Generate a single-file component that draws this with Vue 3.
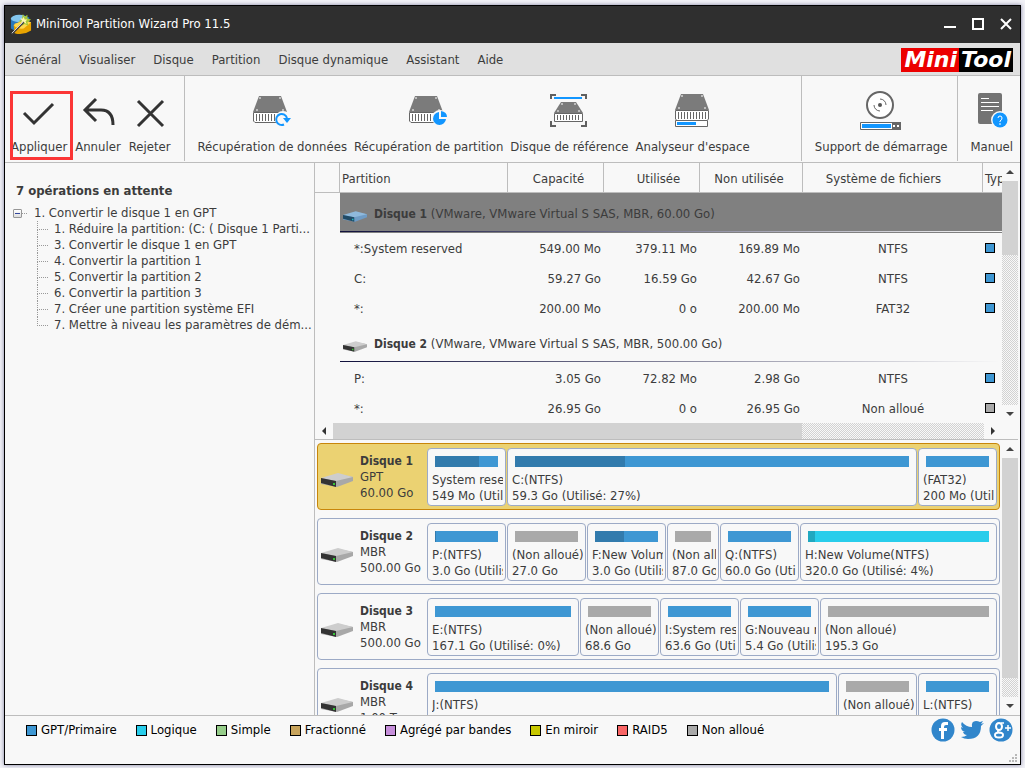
<script setup>
const menu = ['Général', 'Visualiser', 'Disque', 'Partition', 'Disque dynamique', 'Assistant', 'Aide']

const operations = [
  '1. Réduire la partition: (C: ( Disque 1 Parti...',
  '3. Convertir le disque 1 en GPT',
  '4. Convertir la partition 1',
  '5. Convertir la partition 2',
  '6. Convertir la partition 3',
  '7. Créer une partition système EFI',
  '7. Mettre à niveau les paramètres de dém...',
]

const groups = [
  {
    name: 'Disque 1',
    info: '(VMware, VMware Virtual S SAS, MBR, 60.00 Go)',
    selected: true,
    rows: [
      ['*:System reserved', '549.00 Mo', '379.11 Mo', '169.89 Mo', 'NTFS', 'primary'],
      ['C:', '59.27 Go', '16.59 Go', '42.67 Go', 'NTFS', 'primary'],
      ['*:', '200.00 Mo', '0 o', '200.00 Mo', 'FAT32', 'primary'],
    ],
  },
  {
    name: 'Disque 2',
    info: '(VMware, VMware Virtual S SAS, MBR, 500.00 Go)',
    selected: false,
    rows: [
      ['P:', '3.05 Go', '72.82 Mo', '2.98 Go', 'NTFS', 'primary'],
      ['*:', '26.95 Go', '0 o', '26.95 Go', 'Non alloué', 'free'],
    ],
  },
]

const disks = [
  {
    name: 'Disque 1', scheme: 'GPT', size: '60.00 Go', selected: true,
    parts: [
      { label: 'System reserved', size: '549 Mo (Utilisé', used: 70, kind: 'primary', span: 'normal' },
      { label: 'C:(NTFS)', size: '59.3 Go (Utilisé: 27%)', used: 28, kind: 'primary', span: 'grow' },
      { label: '(FAT32)', size: '200 Mo (Utilisé', used: 0, kind: 'primary', span: 'normal' },
    ],
  },
  {
    name: 'Disque 2', scheme: 'MBR', size: '500.00 Go',
    parts: [
      { label: 'P:(NTFS)', size: '3.0 Go (Utilisé', used: 2, kind: 'primary', span: 'normal' },
      { label: '(Non alloué)', size: '27.0 Go', used: 0, kind: 'free', span: 'normal' },
      { label: 'F:New Volume', size: '3.0 Go (Utilisé', used: 46, kind: 'primary', span: 'normal' },
      { label: '(Non alloué)', size: '87.0 Go', used: 0, kind: 'free', span: 'small' },
      { label: 'Q:(NTFS)', size: '60.0 Go (Utilisé', used: 0, kind: 'primary', span: 'normal' },
      { label: 'H:New Volume(NTFS)', size: '320.0 Go (Utilisé: 4%)', used: 4, kind: 'logical', span: 'grow' },
    ],
  },
  {
    name: 'Disque 3', scheme: 'MBR', size: '500.00 Go',
    parts: [
      { label: 'E:(NTFS)', size: '167.1 Go (Utilisé: 0%)', used: 0, kind: 'primary', span: 'large' },
      { label: '(Non alloué)', size: '68.6 Go', used: 0, kind: 'free', span: 'normal' },
      { label: 'I:System reserved', size: '63.6 Go (Utilisé', used: 0, kind: 'primary', span: 'normal' },
      { label: 'G:Nouveau nom', size: '5.4 Go (Utilisé', used: 0, kind: 'primary', span: 'normal' },
      { label: '(Non alloué)', size: '195.3 Go', used: 0, kind: 'free', span: 'grow' },
    ],
  },
  {
    name: 'Disque 4', scheme: 'MBR', size: '1.00 To',
    parts: [
      { label: 'J:(NTFS)', size: '', used: 0, kind: 'primary', span: 'grow' },
      { label: '(Non alloué)', size: '', used: 0, kind: 'free', span: 'normal' },
      { label: 'L:(NTFS)', size: '', used: 0, kind: 'primary', span: 'normal' },
    ],
  },
]

const legend = [
  ['GPT/Primaire', 'primary'],
  ['Logique', 'logical'],
  ['Simple', 'simple'],
  ['Fractionné', 'spanned'],
  ['Agrégé par bandes', 'striped'],
  ['En miroir', 'mirror'],
  ['RAID5', 'raid'],
  ['Non alloué', 'free'],
]
</script>

<template>
  <div class="desktop">
    <svg class="defs" aria-hidden="true">
      <symbol id="drive" viewBox="0 0 32 14">
        <path d="M0 6 17 1 32 4 32 8 16 14 0 11Z" fill="#a8a8a8" />
        <path d="M0 5 17 0 32 4 15 8Z" fill="#cdcdcd" />
        <path d="M0 5 15 8 15 14 0 10Z" fill="#333" />
        <path d="M12 10h2v2h-2z" fill="#35c435" />
      </symbol>
      <symbol id="drive-blue" viewBox="0 0 32 14">
        <path d="M0 6 17 1 32 4 32 8 16 14 0 11Z" fill="#6f9cc6" />
        <path d="M0 5 17 0 32 4 15 8Z" fill="#8fb9dc" />
        <path d="M0 5 15 8 15 14 0 10Z" fill="#204a66" />
        <path d="M12 10h2v2h-2z" fill="#20b8c0" />
      </symbol>
      <symbol id="hdd" viewBox="0 0 36 30">
        <path d="M7 1h22l6 16H1Z" fill="#7b7b7b" />
        <path d="M1.500 17.500h33v8.500l-1.500 1.500h-30l-1.500-1.500z" fill="#fff" stroke="#666" />
        <path d="M4.500 19v7M7.500 19v7M10.500 19v7M13.500 19v7M16.500 19v7M19.500 19v7M22.500 19v7M25.500 19v7M28.500 19v7M31.500 19v7" stroke="#666" />
        <path d="M8 2v2M28 2v2M4 15h2M30 15h2" stroke="#fff" />
      </symbol>
    </svg>

    <div class="window">
      <header class="titlebar">
        <svg class="app-icon" viewBox="0 0 24 24" aria-hidden="true">
          <path d="M1 6Q11-1 21 5v12Q12 25 1 17Z" fill="#2878bd" />
          <ellipse cx="10" cy="6" rx="9" ry="4" fill="#83c6ee" />
          <path d="M4 13Q13 7 23 10v9q-9 6-18 3Z" fill="#e9a400" />
          <path d="M4 13Q13 7 23 10l-8 7q-7 1-11-4Z" fill="#ffd84e" />
          <path d="m14 1 2 3 3-2 0 4 4 1-4 3 1 4-4-2-3 2 0-4-4-1 4-2z" fill="#a6c636" />
          <path d="m15 4 1 3 3 0-2 2 1 3-3-2-3 1 1-3-2-2h3z" fill="#fff8b0" />
          <path d="M2 23 15 10" stroke="#444" stroke-width="2" />
          <path d="M2 22 14 10" stroke="#ddd" />
        </svg>
        <h1>MiniTool Partition Wizard Pro 11.5</h1>
        <div class="controls">
          <button type="button" aria-label="Réduire"><svg viewBox="0 0 12 12"><path d="M0 9h12" stroke="#fff" stroke-width="2" /></svg></button>
          <button type="button" aria-label="Agrandir"><svg viewBox="0 0 12 12"><path d="M1 1h10v10H1z" fill="none" stroke="#fff" stroke-width="2" /></svg></button>
          <button type="button" aria-label="Fermer"><svg viewBox="0 0 12 12"><path d="m1 1 10 10M11 1 1 11" stroke="#fff" stroke-width="2" /></svg></button>
        </div>
      </header>

      <nav class="menubar">
        <button v-for="m in menu" :key="m" type="button">{{ m }}</button>
        <div class="brand"><span class="mini">Mini</span><span class="tool">Tool</span></div>
      </nav>

      <div class="toolbar">
        <div class="group edit">
          <button type="button" class="apply">
            <svg viewBox="0 0 40 40"><path d="m5 21 10 10 19-19" fill="none" stroke="#333" stroke-width="3" /></svg>
            <span>Appliquer</span>
          </button>
          <button type="button">
            <svg viewBox="0 0 40 40"><path d="M18 7 7 18l11 11M7 18h16q12 0 12 15" fill="none" stroke="#333" stroke-width="3" /></svg>
            <span>Annuler</span>
          </button>
          <button type="button">
            <svg viewBox="0 0 40 40"><path d="m8 9 25 25M33 9 8 34" stroke="#333" stroke-width="3" /></svg>
            <span>Rejeter</span>
          </button>
        </div>
        <div class="group tools">
          <button type="button">
            <svg viewBox="0 0 40 40">
              <use href="#hdd" x="0" y="3" width="36" height="30" />
              <circle cx="31" cy="27" r="8" fill="#f8f8f8" />
              <path d="M32 32.500A5.500 5.500 0 1 1 35 26" fill="none" stroke="#1296ff" stroke-width="2" />
              <path d="M31 26h8l-4 5z" fill="#1296ff" />
            </svg>
            <span>Récupération de données</span>
          </button>
          <button type="button">
            <svg viewBox="0 0 40 40">
              <use href="#hdd" x="-1" y="3" width="36" height="30" />
              <circle cx="31" cy="26" r="8" fill="#f8f8f8" />
              <path d="M30 20a6.500 6.500 0 1 0 7 7h-7z" fill="#1296ff" />
              <path d="M32 19q6 1 6 6h-6z" fill="#1296ff" />
            </svg>
            <span>Récupération de partition</span>
          </button>
          <button type="button">
            <svg viewBox="0 0 40 40">
              <path d="M2 7V3h5M32 3h5v4M2 29v5h5M32 34h5v-5" fill="none" stroke="#606060" stroke-width="2" />
              <path d="M5 6h28" stroke="#1296ff" stroke-width="2" />
              <path d="M12 10h15l7 11H5Z" fill="#7b7b7b" />
              <path d="M5.500 21.500h28v8h-28z" fill="#fff" stroke="#666" />
              <path d="M8.500 23v5M11.500 23v5M14.500 23v5M17.500 23v5M20.500 23v5M23.500 23v5M26.500 23v5M29.500 23v5" stroke="#666" />
              <path d="M13 11v2M26 11v2M8 19h2M29 19h2" stroke="#fff" />
            </svg>
            <span>Disque de référence</span>
          </button>
          <button type="button">
            <svg viewBox="0 0 40 40">
              <use href="#hdd" x="1" y="1" width="36" height="30" />
              <path d="M2.500 28.500h32v6h-32z" fill="#fff" stroke="#666" />
              <path d="M4 31.500h19" stroke="#1296ff" stroke-width="3" />
            </svg>
            <span>Analyseur d'espace</span>
          </button>
        </div>
        <div class="group boot">
          <button type="button">
            <svg viewBox="0 0 40 40" class="overflow">
              <circle cx="19" cy="13" r="13" fill="#fff" stroke="#666" stroke-width="2" />
              <circle cx="19" cy="13" r="2" fill="#555" />
              <path d="M19 7a6 6 0 0 1 6 6M19 19a6 6 0 0 1-6-6" fill="none" stroke="#666" />
              <path d="M-.5 30.500h40v7h-40z" fill="#fff" stroke="#666" />
              <path d="M1 34h29" stroke="#1296ff" stroke-width="4" />
              <path d="M31 30h9v8h-9z" fill="#666" />
              <path d="M32 34h2M36 34h2" stroke="#fff" stroke-width="2" />
            </svg>
            <span>Support de démarrage</span>
          </button>
        </div>
        <div class="group last">
          <button type="button">
            <svg viewBox="0 0 40 40">
              <path d="M6 3q0-2 2-2h20q2 0 2 2v29H8q-2 0-2-2Z" fill="#737373" />
              <path d="M9 6.500h8M9 10.500h18M9 14.500h18M9 18.500h12" stroke="#fff" />
              <circle cx="28" cy="28" r="9" fill="#f8f8f8" />
              <circle cx="28" cy="28" r="7.500" fill="#1296ff" />
              <path d="M26 26q0-2 2-2t2 2-2 3v1M28 31v2" fill="none" stroke="#fff" />
            </svg>
            <span>Manuel</span>
          </button>
        </div>
      </div>

      <main class="main">
        <aside class="pending">
          <h2>7 opérations en attente</h2>
          <div class="root">
            <button type="button" class="toggle" aria-label="Replier"></button>
            <span class="stub"></span>
            <span>1. Convertir le disque 1 en GPT</span>
          </div>
          <ul class="tree">
            <li v-for="o in operations" :key="o">{{ o }}</li>
          </ul>
        </aside>

        <section class="content">
          <div class="table-pane">
            <div class="table-view">
              <table>
                <colgroup>
                  <col class="c-gutter" /><col class="c-name" /><col class="c-size" /><col class="c-size" />
                  <col class="c-free" /><col class="c-fs" /><col class="c-type" />
                </colgroup>
                <thead>
                  <tr>
                    <th></th>
                    <th class="left">Partition</th>
                    <th class="nudged">Capacité</th>
                    <th class="shifted">Utilisée</th>
                    <th class="before">Non utilisée</th>
                    <th class="wide-before">Système de fichiers</th>
                    <th class="left">Type</th>
                  </tr>
                </thead>
                <tbody v-for="g in groups" :key="g.name">
                  <tr class="disk-row" :class="{ selected: g.selected }">
                    <td></td>
                    <td colspan="6" class="disk-cell">
                      <div class="disk-title">
                        <svg class="row-drive" aria-hidden="true"><use :href="g.selected ? '#drive-blue' : '#drive'" /></svg>
                        <span><b>{{ g.name }}</b> {{ g.info }}</span>
                      </div>
                    </td>
                  </tr>
                  <tr v-for="r in g.rows" :key="r[0]">
                    <td></td>
                    <td class="name">{{ r[0] }}</td>
                    <td class="num">{{ r[1] }}</td>
                    <td class="num">{{ r[2] }}</td>
                    <td class="num">{{ r[3] }}</td>
                    <td class="fs">{{ r[4] }}</td>
                    <td class="type"><i class="swatch small" :class="r[5]"></i></td>
                  </tr>
                </tbody>
              </table>
            </div>
            <div class="vbar">
              <button type="button" aria-label="Défiler vers le haut"><i class="up"></i></button>
              <div class="track"><div class="thumb third"></div></div>
              <button type="button" aria-label="Défiler vers le bas"><i class="down"></i></button>
            </div>
            <div class="hbar">
              <button type="button" aria-label="Défiler vers la gauche"><i class="prev"></i></button>
              <div class="track"><div class="thumb wide"></div></div>
              <button type="button" aria-label="Défiler vers la droite"><i class="next"></i></button>
            </div>
          </div>

          <div class="map-pane">
            <div class="map">
              <article v-for="d in disks" :key="d.name" class="card" :class="{ selected: d.selected }">
                <svg class="card-drive" aria-hidden="true"><use href="#drive" /></svg>
                <div class="disk-info">
                  <b>{{ d.name }}</b>
                  <span>{{ d.scheme }}</span>
                  <span>{{ d.size }}</span>
                </div>
                <div class="parts">
                  <div v-for="(p, i) in d.parts" :key="i" class="part" :class="p.span">
                    <div class="bar" :class="p.kind"><div class="used" :style="{ width: p.used + '%' }"></div></div>
                    <div class="line">{{ p.label }}</div>
                    <div class="line">{{ p.size }}</div>
                  </div>
                </div>
              </article>
            </div>
            <div class="vbar">
              <button type="button" aria-label="Défiler vers le haut"><i class="up"></i></button>
              <div class="track"><div class="thumb most"></div></div>
              <button type="button" aria-label="Défiler vers le bas"><i class="down"></i></button>
            </div>
          </div>
        </section>
      </main>

      <footer class="footer">
        <ul class="legend">
          <li v-for="l in legend" :key="l[0]"><i class="swatch" :class="l[1]"></i>{{ l[0] }}</li>
        </ul>
        <div class="social">
          <a href="#" aria-label="Facebook">
            <svg viewBox="0 0 24 24"><circle cx="12" cy="12" r="11.500" fill="#3186cb" /><path d="M10 21v-8H8v-3h2V8q0-4 4-4h3v3h-2q-2 0-2 2v1h3v3h-3v8z" fill="#fff" /></svg>
          </a>
          <a href="#" aria-label="Twitter">
            <svg viewBox="0 0 24 24"><path d="M1 19q4 0 6-2-3 0-4-3h2q-4-1-4-5l2 1Q0 7 2 4q4 5 10 5-1-6 4-6 2 0 4 1l3-1-2 3 3-1-3 3q0 13-13 13-4 0-7-2z" fill="#3186cb" /></svg>
          </a>
          <a href="#" aria-label="Google+">
            <svg viewBox="0 0 24 24">
              <circle cx="12" cy="12" r="11.500" fill="#3186cb" />
              <ellipse cx="10" cy="8.500" rx="3" ry="3.500" fill="none" stroke="#fff" stroke-width="2" />
              <ellipse cx="10" cy="17" rx="4" ry="2.500" fill="none" stroke="#fff" stroke-width="2" />
              <path d="M12 5h3M10 12q-3 1 1 3" fill="none" stroke="#fff" stroke-width="1.500" />
              <path d="M16 10h6M19 7v6" stroke="#fff" stroke-width="1.500" />
            </svg>
          </a>
        </div>
        <svg class="grip" viewBox="0 0 8 8" aria-hidden="true">
          <path d="M6 0h2v2H6zM3 3h2v2H3zM6 3h2v2H6zM0 6h2v2H0zM3 6h2v2H3zM6 6h2v2H6z" fill="#b8b8b8" />
        </svg>
      </footer>
    </div>
  </div>
</template>

<style>
body {
  background: #f1f1f6;
}
</style>

<style scoped>
* {
  box-sizing: border-box;
}
button {
  appearance: none;
  border: 0;
  margin: 0;
  padding: 0;
  background: none;
  font: inherit;
  color: inherit;
}
ul {
  list-style: none;
  margin: 0;
  padding: 0;
}
.defs {
  position: absolute;
  width: 0;
  height: 0;
}
.desktop {
  height: 100vh;
  padding: 5px 4px 3px;
  font: 13px/16px "DejaVu Sans Condensed", "DejaVu Sans", sans-serif;
  color: #3c3c3c;
}
.window {
  display: flex;
  flex-direction: column;
  height: 100%;
  border: 1px solid #000;
  background: #f8f8f8;
  box-shadow: 0 0 4px #7c7c9c;
}

/* title bar */
.titlebar {
  display: flex;
  align-items: center;
  flex: none;
  height: 37px;
  padding: 0 8px 2px 5px;
  background: #2f2f2f;
  color: #fff;
}
.app-icon {
  width: 22px;
  height: 22px;
}
h1 {
  margin: 0 auto 0 4px;
  font-size: 13px;
  font-weight: normal;
}
.controls {
  display: flex;
  gap: 16px;
}
.controls svg {
  display: block;
  width: 12px;
  height: 12px;
}

/* menu */
.menubar {
  display: flex;
  align-items: center;
  flex: none;
  gap: 18px;
  height: 33px;
  padding: 1px 7px 0 10px;
  border-bottom: 1px solid #bdbdbd;
  background: #e0e0e0;
}
.brand {
  display: flex;
  margin-left: auto;
  font: italic bold 22px/24px "DejaVu Sans", sans-serif;
  color: #fff;
}
.mini {
  padding: 0 2px 0 3px;
  background: #ec0000;
}
.tool {
  padding: 0 2px;
  background: #000;
}

/* toolbar */
.toolbar {
  display: flex;
  flex: none;
  height: 87px;
  border-bottom: 1px solid #bdbdbd;
}
.group {
  display: flex;
  align-items: flex-start;
  height: 85px;
  padding: 16px 10px 0 13px;
  border-right: 1px solid #bdbdbd;
}
.group.edit {
  gap: 8px;
  padding: 16px 14px 0 6px;
}
.group.tools {
  flex: 1;
  gap: 7px;
  padding-left: 12px;
}
.group.last {
  padding-left: 12px;
  padding-right: 7px;
  border-right: 0;
}
.group button {
  display: flex;
  flex-direction: column;
  align-items: center;
  gap: 7px;
  white-space: nowrap;
}
.group svg {
  display: block;
  width: 40px;
  height: 40px;
  overflow: visible;
}
.apply {
  position: relative;
}
.apply::after {
  content: "";
  position: absolute;
  inset: -1px -6px -5px -1px;
  border: 3px solid #fb3636;
}

/* pending operations */
.main {
  display: flex;
  flex: 1;
  min-height: 0;
}
.pending {
  flex: none;
  width: 310px;
  padding: 20px 0 0 8px;
  border-right: 1px solid #bdbdbd;
  white-space: nowrap;
  overflow: hidden;
}
h2 {
  margin: 0 0 6px 3px;
  font-size: 13px;
  line-height: 16px;
}
.root {
  display: flex;
  align-items: center;
}
.toggle {
  width: 9px;
  height: 9px;
  border: 1px solid #969696;
  border-radius: 1px;
  background: linear-gradient(#33479c, #33479c) center / 5px 1px no-repeat, linear-gradient(#fff, #ddd);
}
.stub {
  width: 5px;
  margin-right: 7px;
  border-top: 1px dotted #999;
}
.tree {
  margin-left: 24px;
}
.tree li {
  position: relative;
  padding-left: 17px;
}
.tree li::before {
  content: "";
  position: absolute;
  left: 0;
  top: 0;
  width: 10px;
  height: 8px;
  border-left: 1px dotted #999;
  border-bottom: 1px dotted #999;
}
.tree li:not(:last-child)::after {
  content: "";
  position: absolute;
  left: 0;
  top: 8px;
  height: 8px;
  border-left: 1px dotted #999;
}

/* partition table */
.content {
  display: flex;
  flex: 1;
  flex-direction: column;
  min-width: 0;
  padding-right: 2px;
}
.table-pane {
  display: grid;
  flex: none;
  grid-template-columns: minmax(0, 1fr) 16px;
  grid-template-rows: 260px 16px;
  border-bottom: 1px solid #bdbdbd;
}
.table-view {
  overflow: hidden;
}
table {
  width: 900px;
  table-layout: fixed;
  border-collapse: separate;
  border-spacing: 0;
}
.c-gutter { width: 25px; }
.c-name { width: 168px; }
.c-size { width: 96px; }
.c-free { width: 103px; }
.c-fs { width: 180px; }
th {
  height: 30px;
  padding: 2px 2px 0;
  border-right: 1px solid #bdbdbd;
  border-bottom: 1px solid #bdbdbd;
  font-weight: normal;
}
th.left {
  text-align: left;
}
th.nudged {
  padding-left: 8px;
}
th.shifted {
  padding-left: 16px;
}
th.before {
  padding-right: 6px;
}
th.wide-before {
  padding-right: 20px;
}
td {
  height: 30px;
  padding: 2px 2px 0;
}
.disk-row td {
  height: 40px;
}
.disk-row .disk-cell {
  background: linear-gradient(90deg, #10103c, #f8f8f8 660px) 0 38px / 100% 1px no-repeat;
}
.disk-row.selected .disk-cell {
  background-color: #808080;
}
.disk-title {
  display: flex;
  align-items: center;
  gap: 7px;
  padding-left: 1px;
}
.disk-title b,
.disk-info b {
  font-size: 12px;
}
.row-drive {
  width: 24px;
  height: 11px;
  margin-top: 4px;
}
.name {
  padding-left: 14px;
}
.num {
  padding-right: 3px;
  text-align: right;
}
.fs {
  text-align: center;
}
.swatch {
  display: block;
  flex: none;
  width: 11px;
  height: 11px;
  border: 1px solid #000;
}
td.type {
  padding-top: 0;
}
.swatch.small {
  width: 10px;
  height: 10px;
}
.primary { background: #3e97d3; }
.logical { background: #28cdeb; }
.simple { background: #96cd8a; }
.spanned { background: #c8a45c; }
.striped { background: #c68fdb; }
.mirror { background: #c8c800; }
.raid { background: #f96666; }
.free { background: #a9a9a9; }

/* scroll bars */
.vbar,
.hbar {
  display: flex;
  flex-direction: column;
}
.vbar {
  width: 16px;
}
.hbar {
  flex-direction: row;
}
.vbar button,
.hbar button {
  display: flex;
  flex: none;
  align-items: center;
  justify-content: center;
  width: 18px;
  height: 16px;
}
.vbar button {
  width: 16px;
  height: 18px;
}
.track {
  flex: 1;
  background: repeating-conic-gradient(#d2d2d2 0 25%, #f8f8f8 0 50%) 0 0 / 2px 2px;
}
.thumb {
  height: 100%;
  background: #d2d2d2;
}
.thumb.third { height: 33%; }
.thumb.most { height: 92%; }
.thumb.wide { width: 72%; }
.up, .down {
  border: 4px solid transparent;
  border-top-width: 0;
  border-bottom-color: #444;
}
.down {
  border-width: 4px 4px 0;
  border-top-color: #444;
}
.prev, .next {
  border: 4px solid transparent;
  border-left-width: 0;
  border-right-color: #333;
}
.next {
  border-width: 4px 0 4px 4px;
  border-left-color: #333;
}

/* disk map */
.map-pane {
  display: flex;
  flex: 1;
  min-height: 0;
}
.map {
  flex: 1;
  min-width: 0;
  padding: 3px 2px 0;
  overflow: hidden;
}
.card {
  display: flex;
  height: 67px;
  margin-bottom: 8px;
  padding: 4px 2px 3px 3px;
  border: 1px solid #9caac6;
  border-radius: 4px;
}
.card.selected {
  border-color: #c8860a;
  background: #ebd272;
}
.card-drive {
  flex: none;
  align-self: center;
  width: 32px;
  height: 14px;
  margin-top: 6px;
}
.disk-info {
  display: flex;
  flex: none;
  flex-direction: column;
  width: 74px;
  padding: 5px 0 0 7px;
}
.disk-info,
.part {
  white-space: nowrap;
}
.parts {
  display: flex;
  flex: 1;
  gap: 1px;
  min-width: 0;
}
.part {
  flex: none;
  width: 79px;
  padding: 7px 2px 0 4px;
  border: 1px solid #9caac6;
  border-radius: 4px;
  background: #f8f8f8;
}
.part.small { width: 52px; }
.part.large { width: 152px; }
.part.grow {
  flex: 1;
  min-width: 0;
}
.bar {
  height: 11px;
  margin: 0 5px 5px 3px;
}
.used {
  height: 100%;
  background: rgb(0 0 0 / 18%);
}
.line {
  overflow: hidden;
}

/* footer */
.footer {
  display: flex;
  flex: none;
  position: relative;
  align-items: flex-start;
  justify-content: space-between;
  height: 49px;
  padding: 2px 7px 0 21px;
  border-top: 1px solid #bdbdbd;
  color: #000;
}
.legend {
  display: flex;
  gap: 19px;
  padding-top: 4px;
}
.legend li {
  display: flex;
  align-items: center;
  gap: 4px;
}
.social {
  display: flex;
  gap: 5px;
}
.social svg {
  display: block;
  width: 24px;
  height: 24px;
}
.grip {
  position: absolute;
  right: 3px;
  bottom: 2px;
  width: 8px;
  height: 8px;
}
</style>
